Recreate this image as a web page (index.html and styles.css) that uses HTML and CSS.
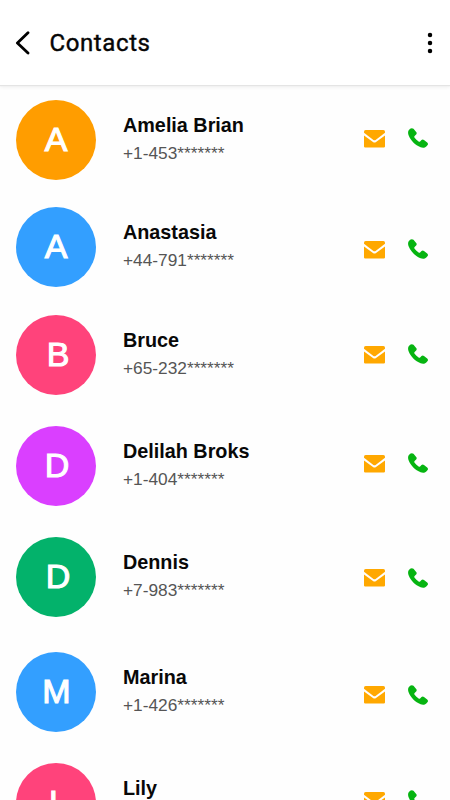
FILE: index.html
```html
<!DOCTYPE html>
<html lang="en">
<head>
<meta charset="utf-8">
<title>Contacts</title>
<link rel="stylesheet" href="styles.css">
</head>
<body>
<svg class="defs" aria-hidden="true">
  <symbol id="mail" viewBox="0 0 21 18">
    <path d="M1.6 0H19.4Q21 0 21 1.5V2.8L11.6 9.9Q10.5 10.7 9.4 9.9L0 2.8V1.5Q0 0 1.6 0Z"/>
    <path d="M0 5.4L9 12Q10.5 13 12 12L21 5.4V16.6Q21 17.6 19.8 17.6H1.2Q0 17.6 0 16.6Z"/>
  </symbol>
  <symbol id="phone" viewBox="0 0 20 20">
    <path d="M2.1.8C3.1-.1 4.6-.1 5.5.8L8.2 4.1C8.9 5 8.8 5.8 8.1 6.5L6.6 8C6.1 8.6 6.2 9 6.6 9.7C7.7 11.2 9 12.5 10.6 13.5C11.2 13.9 11.6 13.9 12.1 13.4L13.5 12C14.3 11.2 15.1 11.2 16 11.9L19.2 14.5C20.2 15.3 20.2 16.3 19.4 17.2L18.3 18.4C16.9 19.8 14.7 20 12.6 19.2C7.3 17.2 2.6 12.5.6 7.3C-.3 4.9 0 2.8 1.2 1.7Z"/>
  </symbol>
</svg>
<div class="screen">
  <header class="header">
    <svg class="back" viewBox="0 0 16 24"><path d="M13 1.7L2.4 12L13 22.1"/></svg>
    <h1>Contacts</h1>
    <svg class="more" viewBox="0 0 6 22"><circle cx="3" cy="3" r="2.25"/><circle cx="3" cy="11" r="2.25"/><circle cx="3" cy="19" r="2.25"/></svg>
  </header>
  <ul class="contacts">
    <li class="contact amelia">
      <div class="avatar">A</div>
      <div class="info"><div class="name">Amelia Brian</div><div class="number">+1-453*******</div></div>
      <div class="actions"><svg class="mail"><use href="#mail"/></svg><svg class="phone"><use href="#phone"/></svg></div>
    </li>
    <li class="contact anastasia">
      <div class="avatar">A</div>
      <div class="info"><div class="name">Anastasia</div><div class="number">+44-791*******</div></div>
      <div class="actions"><svg class="mail"><use href="#mail"/></svg><svg class="phone"><use href="#phone"/></svg></div>
    </li>
    <li class="contact bruce">
      <div class="avatar">B</div>
      <div class="info"><div class="name">Bruce</div><div class="number">+65-232*******</div></div>
      <div class="actions"><svg class="mail"><use href="#mail"/></svg><svg class="phone"><use href="#phone"/></svg></div>
    </li>
    <li class="contact delilah">
      <div class="avatar">D</div>
      <div class="info"><div class="name">Delilah Broks</div><div class="number">+1-404*******</div></div>
      <div class="actions"><svg class="mail"><use href="#mail"/></svg><svg class="phone"><use href="#phone"/></svg></div>
    </li>
    <li class="contact dennis">
      <div class="avatar">D</div>
      <div class="info"><div class="name">Dennis</div><div class="number">+7-983*******</div></div>
      <div class="actions"><svg class="mail"><use href="#mail"/></svg><svg class="phone"><use href="#phone"/></svg></div>
    </li>
    <li class="contact marina">
      <div class="avatar">M</div>
      <div class="info"><div class="name">Marina</div><div class="number">+1-426*******</div></div>
      <div class="actions"><svg class="mail"><use href="#mail"/></svg><svg class="phone"><use href="#phone"/></svg></div>
    </li>
    <li class="contact lily">
      <div class="avatar">L</div>
      <div class="info"><div class="name">Lily</div></div>
      <div class="actions"><svg class="mail"><use href="#mail"/></svg><svg class="phone"><use href="#phone"/></svg></div>
    </li>
  </ul>
</div>
</body>
</html>
```
FILE: styles.css
```css
* { box-sizing: border-box; }

body {
  margin: 0;
  background: #fefefe;
  font-family: "Liberation Sans", Arial, sans-serif;
}

.defs { display: none; }

.screen {
  height: 800px;
  overflow: hidden;
}

.header {
  display: flex;
  align-items: center;
  height: 85px;
  padding: 0 17px 0 15px;
  background: #fff;
  box-shadow: 0 1px 1px #e4e4e4, 0 2px 4px #eee;
}

.back {
  width: 16px;
  height: 24px;
  fill: none;
  stroke: #000;
  stroke-width: 2.8;
  stroke-linecap: round;
  stroke-linejoin: round;
}

.header h1 {
  flex: 1;
  margin: 0 0 0 18.5px;
  color: #060606;
  font: 400 24px/30px Roboto, sans-serif;
  letter-spacing: 0.6px;
  -webkit-text-stroke: 0.4px #060606;
}

.more { width: 6px; height: 22px; }

.contacts {
  margin: 0;
  padding: 15.4px 22px 0 16px;
  list-style: none;
}

.contact {
  display: flex;
  align-items: flex-start;
  height: 111px;
}

.avatar {
  width: 80px;
  height: 80px;
  border-radius: 50%;
  color: #fff;
  font-size: 34px;
  line-height: 79px;
  text-align: center;
  -webkit-text-stroke: 1.1px #fff;
}

.info {
  flex: 1;
  padding: 13px 0 0 27px;
}

.name {
  color: #080808;
  font-size: 19.8px;
  font-weight: 700;
  line-height: 24px;
}

.number {
  margin-top: 6px;
  color: #555;
  font-size: 17.3px;
  line-height: 20px;
}

.actions {
  display: flex;
  gap: 23px;
  padding-top: 27.6px;
}

.mail {
  width: 21px;
  height: 18px;
  margin-top: 1.6px;
  fill: #ffa800;
}

.phone {
  width: 20px;
  height: 20px;
  fill: #06b411;
}

.amelia { height: 106.6px; }
.amelia .avatar { background: #ff9d00; }

.anastasia { height: 108px; }
.anastasia .avatar { background: #339fff; }
.anastasia .actions { padding-top: 32px; }

.bruce .avatar { background: #ff437b; padding-left: 4px; }
.bruce .actions { padding-top: 29px; }

.delilah .avatar { background: #da3fff; padding-left: 2px; }
.delilah .actions { padding-top: 27.3px; }

.dennis { height: 115px; }
.dennis .avatar { background: #03b26b; padding-left: 4px; }
.dennis .actions { padding-top: 30.6px; }

.marina .avatar { background: #339fff; padding-left: 1px; }
.marina .actions { padding-top: 32.6px; }

.lily .avatar { background: #ff437b; padding-left: 5px; }
.lily .actions { padding-top: 27px; }
```
